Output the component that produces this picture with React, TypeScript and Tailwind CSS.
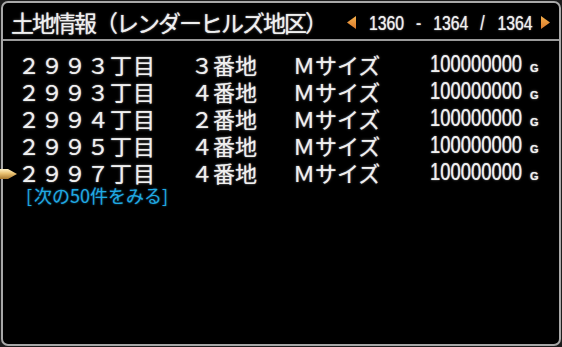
import React from "react";

const rows = [
  { a: "２９９３丁目", b: "３番地", c: "Ｍサイズ", d: "100000000" },
  { a: "２９９３丁目", b: "４番地", c: "Ｍサイズ", d: "100000000" },
  { a: "２９９４丁目", b: "２番地", c: "Ｍサイズ", d: "100000000" },
  { a: "２９９５丁目", b: "４番地", c: "Ｍサイズ", d: "100000000" },
  { a: "２９９７丁目", b: "４番地", c: "Ｍサイズ", d: "100000000" },
];

const jp = "font-['Noto_Sans_CJK_JP','Noto_Sans',sans-serif]";
const latin = "font-['Liberation_Sans','Arial',sans-serif]";
const glow = "[text-shadow:0_0_1px_rgba(255,255,255,0.7),0_0_3px_rgba(255,255,255,0.3)]";

function Tri({ dir }: { dir: "left" | "right" }) {
  return (
    <svg width="9" height="13" viewBox="0 0 9 13" className="shrink-0">
      <defs>
        <linearGradient id={`g-${dir}`} x1="0" y1="0" x2="0" y2="1">
          <stop offset="0" stopColor="#f6b04c" />
          <stop offset="1" stopColor="#d9782a" />
        </linearGradient>
      </defs>
      {dir === "left" ? (
        <polygon points="9,0 9,13 0,6.5" fill={`url(#g-${dir})`} />
      ) : (
        <polygon points="0,0 0,13 9,6.5" fill={`url(#g-${dir})`} />
      )}
    </svg>
  );
}

export default function App() {
  return (
    <div className="w-[562px] h-[347px] bg-[#1c1c1c] p-[1px] overflow-hidden">
      <div className="relative h-full rounded-[7px] border-2 border-[#a8a8a8] bg-black text-[#f0f0f0]">
        {/* header */}
        <div className="flex h-[38px] items-center border-b-2 border-[#9a9a9a] pl-[8px] pr-[9px] pt-[2px]">
          <div className={`${jp} ${glow} text-[23px] tracking-[-2px] leading-[26px] whitespace-nowrap`}>
            土地情報（レンダーヒルズ地区）
          </div>
          <div className="ml-auto flex items-center pt-[1px]">
            <Tri dir="left" />
            <div className="ml-[13px] w-[163px] h-[22px] overflow-visible">
              <div
                className={`${latin} ${glow} inline-flex origin-left scale-x-[0.75] text-[21px] leading-[22px] whitespace-nowrap`}
              >
                <span>1360</span>
                <span className="ml-[16px]">-</span>
                <span className="ml-[16px]">1364</span>
                <span className="ml-[16px]">/</span>
                <span className="ml-[17px]">1364</span>
              </div>
            </div>
            <div className="ml-[9px]">
              <Tri dir="right" />
            </div>
          </div>
        </div>

        {/* body */}
        <div className="pt-[9px] pl-[15px]">
          {rows.map((r, i) => (
            <div
              key={i}
              className="grid h-[27px] grid-cols-[173px_102px_137px_auto] items-center"
            >
              <div className={`${jp} ${glow} text-[22px] leading-[22px] tracking-[1px] whitespace-nowrap`}>
                {r.a}
              </div>
              <div className={`${jp} ${glow} text-[22px] leading-[22px] whitespace-nowrap`}>
                {r.b}
              </div>
              <div className={`${jp} ${glow} text-[22px] leading-[22px] whitespace-nowrap`}>
                {r.c}
              </div>
              <div className="flex h-[27px] items-baseline pt-[1px]">
                <div className="w-[100px] overflow-visible">
                  <span
                    className={`${latin} ${glow} inline-block origin-left scale-x-[0.8] text-[23px] leading-[27px] whitespace-nowrap`}
                  >
                    {r.d}
                  </span>
                </div>
                <span className={`${latin} ${glow} text-[11px] font-bold leading-none`}>G</span>
              </div>
            </div>
          ))}
          <div
            className={`${jp} mt-[1px] pl-[8px] text-[18px] leading-[18px] text-[#1fa9e3] whitespace-nowrap [text-shadow:0_0_2px_rgba(40,170,230,0.6)]`}
          >
            <span className="mr-[2px]">[</span>次の50件をみる<span>]</span>
          </div>
        </div>

        {/* cursor */}
        <svg
          width="17"
          height="14"
          viewBox="0 0 17 14"
          className="absolute left-[-3px] top-[164px]"
        >
          <defs>
            <linearGradient id="cur" x1="0" y1="0" x2="0" y2="1">
              <stop offset="0" stopColor="#fff2c4" />
              <stop offset="0.45" stopColor="#e8c070" />
              <stop offset="1" stopColor="#a8782e" />
            </linearGradient>
          </defs>
          <polygon points="0,2 8,2 17,7 8,12 0,12" fill="url(#cur)" />
        </svg>
      </div>
    </div>
  );
}
